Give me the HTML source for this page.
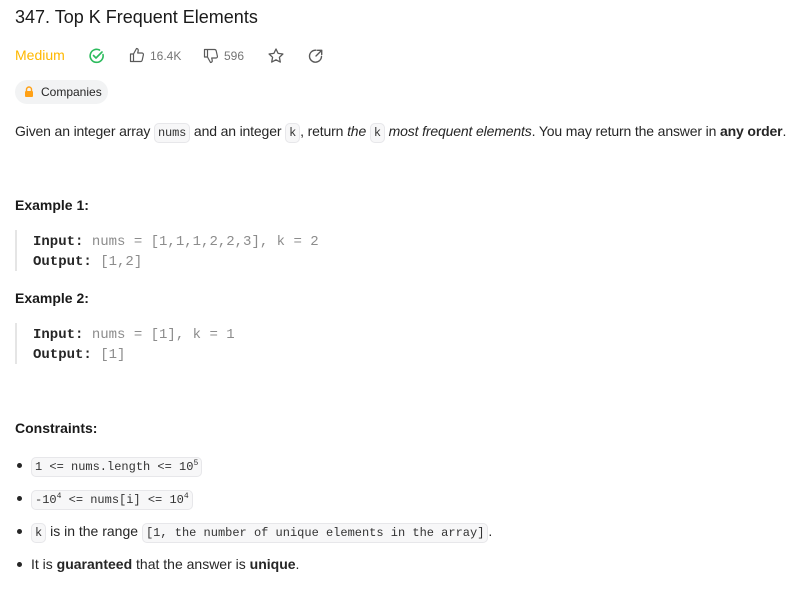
<!DOCTYPE html>
<html><head><meta charset="utf-8"><style>
body{margin:0;background:#fff;font-family:"Liberation Sans",sans-serif;color:#262626;font-size:14px;}
.a{position:absolute;white-space:nowrap;}
code{font-family:"Liberation Mono",monospace;font-size:12px;background:#f7f7f8;border:1px solid #e7e7ea;border-radius:5px;padding:2px 3px;color:#333;}
.pre{font-family:"Liberation Mono",monospace;font-size:14px;color:#8c8c8c;}
.pre b{color:#262626;}
.bar{position:absolute;left:15px;width:2px;background:#e5e5e5;}
sup{font-size:8px;}
.dot{position:absolute;left:17px;width:5px;height:5px;border-radius:50%;background:#262626;}
</style></head><body>
<div class="a" style="left:15px;top:7px;font-size:18px;font-weight:500;color:#1a1a1a;">347. Top K Frequent Elements</div>
<div class="a" style="left:15px;top:47px;font-size:14px;color:#ffb800;">Medium</div>
<svg class="a" style="left:88px;top:47px" width="18" height="18" viewBox="0 0 18 18"><path d="M15 7.5A6.5 6.5 0 1 1 11.5 3" fill="none" stroke="#2cbb5d" stroke-width="1.6" stroke-linecap="round"/><path d="M5.5 8.5l2.5 2.5 6-6" fill="none" stroke="#2cbb5d" stroke-width="1.6" stroke-linecap="round" stroke-linejoin="round"/></svg>
<svg class="a" style="left:129px;top:47px" width="16" height="16" viewBox="0 0 16 16"><path d="M1.5 7h3v7.5h-3zM4.5 7l3-5.5c1.2 0 2 .8 1.7 2.2L8.7 6H13c1 0 1.6.9 1.4 1.8l-1.2 5.3c-.2.8-.8 1.4-1.6 1.4H4.5" fill="none" stroke="#595959" stroke-width="1.2" stroke-linejoin="round"/></svg>
<div class="a" style="left:150px;top:49px;font-size:12px;color:#757575;">16.4K</div>
<svg class="a" style="left:203px;top:48px" width="16" height="16" viewBox="0 0 16 16"><g transform="translate(0,16) scale(1,-1)"><path d="M1.5 7h3v7.5h-3zM4.5 7l3-5.5c1.2 0 2 .8 1.7 2.2L8.7 6H13c1 0 1.6.9 1.4 1.8l-1.2 5.3c-.2.8-.8 1.4-1.6 1.4H4.5" fill="none" stroke="#595959" stroke-width="1.2" stroke-linejoin="round"/></g></svg>
<div class="a" style="left:224px;top:49px;font-size:12px;color:#757575;">596</div>
<svg class="a" style="left:267px;top:47px" width="18" height="18" viewBox="0 0 18 18"><path d="M9 2l2.1 4.4 4.8.6-3.5 3.3.9 4.8L9 12.8 4.7 15.1l.9-4.8L2.1 7l4.8-.6z" fill="none" stroke="#595959" stroke-width="1.3" stroke-linejoin="round"/></svg>
<svg class="a" style="left:307px;top:47px" width="18" height="18" viewBox="0 0 18 18"><path d="M14.5 9.5A6 6 0 1 1 9 3.2" fill="none" stroke="#595959" stroke-width="1.4" stroke-linecap="round"/><path d="M9 9l5.5-5.5M10.5 3.3h4.2v4.2" fill="none" stroke="#595959" stroke-width="1.4" stroke-linecap="round" stroke-linejoin="round"/></svg>
<div class="a" style="left:15px;top:80px;width:93px;height:24px;border-radius:12px;background:#f2f3f4;"></div>
<svg class="a" style="left:24px;top:86px" width="10" height="11" viewBox="0 0 10 11"><path d="M2.5 5V3.5a2.5 2.5 0 0 1 5 0V5" fill="none" stroke="#ffa116" stroke-width="1.4"/><rect x="1" y="5" width="8" height="6" rx="1" fill="#ffa116"/></svg>
<div class="a" style="left:41px;top:85px;font-size:12px;color:#262626;">Companies</div>
<div class="a" style="left:15px;top:123px;letter-spacing:-0.15px;">Given an integer array <code>nums</code> and an integer <code>k</code>, return <i>the</i> <code>k</code> <i>most frequent elements</i>. You may return the answer in <b>any order</b>.</div>
<div class="a" style="left:15px;top:197px;font-weight:bold;color:#1a1a1a;">Example 1:</div>
<div class="bar" style="top:230px;height:41px;"></div>
<div class="a pre" style="left:33px;top:232px;line-height:20px;"><b>Input:</b> nums = [1,1,1,2,2,3], k = 2<br><b>Output:</b> [1,2]</div>
<div class="a" style="left:15px;top:290px;font-weight:bold;color:#1a1a1a;">Example 2:</div>
<div class="bar" style="top:323px;height:41px;"></div>
<div class="a pre" style="left:33px;top:325px;line-height:20px;"><b>Input:</b> nums = [1], k = 1<br><b>Output:</b> [1]</div>
<div class="a" style="left:15px;top:420px;font-weight:bold;color:#1a1a1a;">Constraints:</div>
<div class="dot" style="top:463px;"></div>
<div class="a" style="left:31px;top:457px;"><code>1 &lt;= nums.length &lt;= 10<sup>5</sup></code></div>
<div class="dot" style="top:496px;"></div>
<div class="a" style="left:31px;top:490px;"><code>-10<sup>4</sup> &lt;= nums[i] &lt;= 10<sup>4</sup></code></div>
<div class="dot" style="top:529px;"></div>
<div class="a" style="left:31px;top:523px;"><code>k</code> is in the range <code>[1, the number of unique elements in the array]</code>.</div>
<div class="dot" style="top:562px;"></div>
<div class="a" style="left:31px;top:556px;">It is <b>guaranteed</b> that the answer is <b>unique</b>.</div>
</body></html>
